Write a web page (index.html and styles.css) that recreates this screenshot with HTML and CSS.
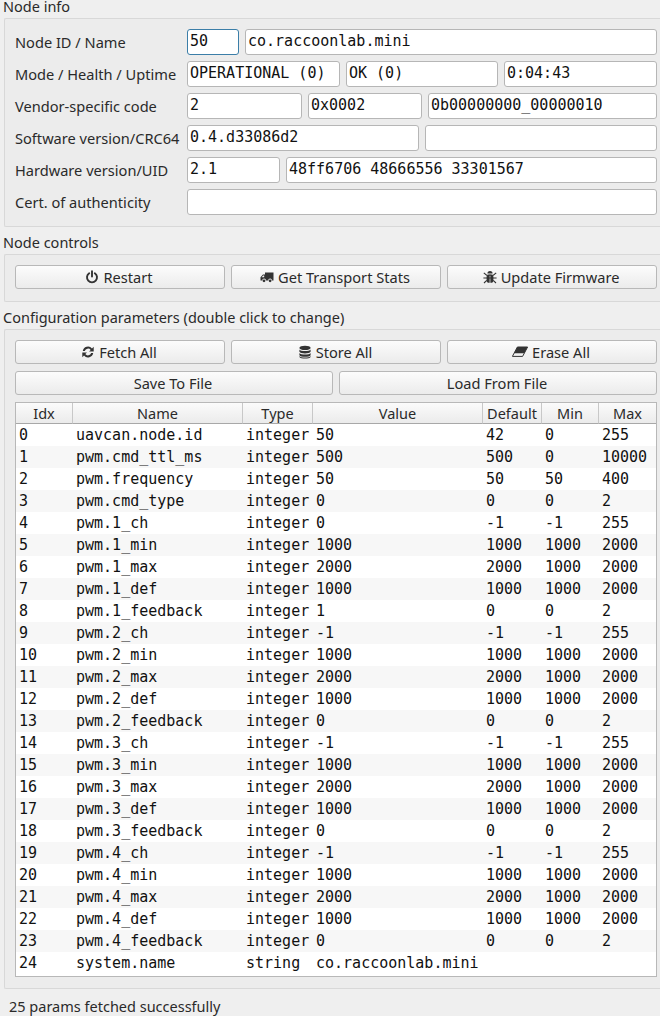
FILE: index.html
```html
<!DOCTYPE html>
<html lang="en">
<head>
<meta charset="utf-8">
<title>Node properties</title>
<link rel="stylesheet" href="styles.css">
</head>
<body>
<div class="title first">Node info</div>
<section class="group info">
  <div class="row"><label>Node ID / Name</label><input class="f w52 focus" value="50"><input class="f grow" value="co.raccoonlab.mini"></div>
  <div class="row"><label>Mode / Health / Uptime</label><input class="f w153" value="OPERATIONAL (0)"><input class="f w152" value="OK (0)"><input class="f grow" value="0:04:43"></div>
  <div class="row"><label>Vendor-specific code</label><input class="f w115" value="2"><input class="f w114" value="0x0002"><input class="f grow" value="0b00000000_00000010"></div>
  <div class="row"><label>Software version/CRC64</label><input class="f w232" value="0.4.d33086d2"><input class="f grow" value=""></div>
  <div class="row"><label>Hardware version/UID</label><input class="f w93" value="2.1"><input class="f grow" value="48ff6706 48666556 33301567"></div>
  <div class="row"><label>Cert. of authenticity</label><input class="f grow" value=""></div>
</section>
<div class="title">Node controls</div>
<section class="group controls">
  <div class="btns">
    <button><svg class="ic" viewBox="0 0 14 14"><path d="M4.2 3.2a5 5 0 1 0 5.6 0" fill="none" stroke="#333" stroke-width="1.9" stroke-linecap="round"/><path d="M7 1.2v5.4" stroke="#333" stroke-width="1.9" stroke-linecap="round"/></svg>Restart</button>
    <button><svg class="ic" viewBox="0 0 14 14"><path d="M5 2.5h8.5v8H12a1.9 1.9 0 0 0-3.8 0H6a1.9 1.9 0 0 0-3.8 0H.5V7.2L3 4.6h2zM1.6 7.3h2.6V5.4H3.2z" fill="#333" fill-rule="evenodd"/><circle cx="4" cy="10.8" r="1.4" fill="#333"/><circle cx="10.1" cy="10.8" r="1.4" fill="#333"/></svg>Get Transport Stats</button>
    <button><svg class="ic" viewBox="0 0 14 14"><path d="M4.4 3.6a2.6 2.6 0 0 1 5.2 0z" fill="#333"/><rect x="3.6" y="4.4" width="6.8" height="8.4" rx="2.6" fill="#333"/><path d="M7 5v8" stroke="#efefef" stroke-width=".7"/><path d="M.8 2.8l2.8 2.4h6.8l2.8-2.4M.4 8h13.2M1 13l2.8-2.6M13 13l-2.8-2.6" fill="none" stroke="#333" stroke-width="1.1"/></svg>Update Firmware</button>
  </div>
</section>
<div class="title">Configuration parameters (double click to change)</div>
<section class="group config">
  <div class="btns">
    <button><svg class="ic" viewBox="0 0 14 14"><path d="M1.8 6A5.3 5.3 0 0 1 11 3.4L12.7 1.8V6.6H8l1.7-1.7A3.4 3.4 0 0 0 3.8 6z" fill="#333"/><path d="M12.2 8A5.3 5.3 0 0 1 3 10.6L1.3 12.2V7.4H6L4.3 9.1A3.4 3.4 0 0 0 10.2 8z" fill="#333"/></svg>Fetch All</button>
    <button><svg class="ic" viewBox="0 0 14 14"><ellipse cx="7" cy="2.9" rx="5.6" ry="2.2" fill="#333"/><path d="M1.4 4.4c1 2 10.200 2 11.200 0v2.400c-1 2.100-10.200 2.100-11.200 0zM1.400 7.900c1 2 10.200 2 11.200 0v2.300c-1 2.200-10.200 2.200-11.200 0z" fill="#333"/><path d="M1.400 11c1 2 10.200 2 11.200 0v.9c-1 2.100-10.200 2.100-11.200 0z" fill="#333"/></svg>Store All</button>
    <button><svg class="ic wide" viewBox="0 0 16 14"><path d="M5.400 2h10.200L10.600 11.400H.4z" fill="none" stroke="#333" stroke-width="1"/><path d="M5.400 2h10.200L12.300 8.200H2.100z" fill="#333"/></svg>Erase All</button>
  </div>
  <div class="btns">
    <button>Save To File</button>
    <button>Load From File</button>
  </div>
  <table>
    <colgroup>
      <col class="c1"><col class="c2"><col class="c3"><col class="c4"><col class="c5"><col class="c6"><col class="c7">
    </colgroup>
    <thead>
      <tr><th>Idx</th><th>Name</th><th>Type</th><th>Value</th><th>Default</th><th>Min</th><th>Max</th></tr>
    </thead>
    <tbody>
      <tr><td>0</td><td>uavcan.node.id</td><td>integer</td><td>50</td><td>42</td><td>0</td><td>255</td></tr>
      <tr><td>1</td><td>pwm.cmd_ttl_ms</td><td>integer</td><td>500</td><td>500</td><td>0</td><td>10000</td></tr>
      <tr><td>2</td><td>pwm.frequency</td><td>integer</td><td>50</td><td>50</td><td>50</td><td>400</td></tr>
      <tr><td>3</td><td>pwm.cmd_type</td><td>integer</td><td>0</td><td>0</td><td>0</td><td>2</td></tr>
      <tr><td>4</td><td>pwm.1_ch</td><td>integer</td><td>0</td><td>-1</td><td>-1</td><td>255</td></tr>
      <tr><td>5</td><td>pwm.1_min</td><td>integer</td><td>1000</td><td>1000</td><td>1000</td><td>2000</td></tr>
      <tr><td>6</td><td>pwm.1_max</td><td>integer</td><td>2000</td><td>2000</td><td>1000</td><td>2000</td></tr>
      <tr><td>7</td><td>pwm.1_def</td><td>integer</td><td>1000</td><td>1000</td><td>1000</td><td>2000</td></tr>
      <tr><td>8</td><td>pwm.1_feedback</td><td>integer</td><td>1</td><td>0</td><td>0</td><td>2</td></tr>
      <tr><td>9</td><td>pwm.2_ch</td><td>integer</td><td>-1</td><td>-1</td><td>-1</td><td>255</td></tr>
      <tr><td>10</td><td>pwm.2_min</td><td>integer</td><td>1000</td><td>1000</td><td>1000</td><td>2000</td></tr>
      <tr><td>11</td><td>pwm.2_max</td><td>integer</td><td>2000</td><td>2000</td><td>1000</td><td>2000</td></tr>
      <tr><td>12</td><td>pwm.2_def</td><td>integer</td><td>1000</td><td>1000</td><td>1000</td><td>2000</td></tr>
      <tr><td>13</td><td>pwm.2_feedback</td><td>integer</td><td>0</td><td>0</td><td>0</td><td>2</td></tr>
      <tr><td>14</td><td>pwm.3_ch</td><td>integer</td><td>-1</td><td>-1</td><td>-1</td><td>255</td></tr>
      <tr><td>15</td><td>pwm.3_min</td><td>integer</td><td>1000</td><td>1000</td><td>1000</td><td>2000</td></tr>
      <tr><td>16</td><td>pwm.3_max</td><td>integer</td><td>2000</td><td>2000</td><td>1000</td><td>2000</td></tr>
      <tr><td>17</td><td>pwm.3_def</td><td>integer</td><td>1000</td><td>1000</td><td>1000</td><td>2000</td></tr>
      <tr><td>18</td><td>pwm.3_feedback</td><td>integer</td><td>0</td><td>0</td><td>0</td><td>2</td></tr>
      <tr><td>19</td><td>pwm.4_ch</td><td>integer</td><td>-1</td><td>-1</td><td>-1</td><td>255</td></tr>
      <tr><td>20</td><td>pwm.4_min</td><td>integer</td><td>1000</td><td>1000</td><td>1000</td><td>2000</td></tr>
      <tr><td>21</td><td>pwm.4_max</td><td>integer</td><td>2000</td><td>2000</td><td>1000</td><td>2000</td></tr>
      <tr><td>22</td><td>pwm.4_def</td><td>integer</td><td>1000</td><td>1000</td><td>1000</td><td>2000</td></tr>
      <tr><td>23</td><td>pwm.4_feedback</td><td>integer</td><td>0</td><td>0</td><td>0</td><td>2</td></tr>
      <tr><td>24</td><td>system.name</td><td>string</td><td colspan="4">co.raccoonlab.mini</td></tr>
    </tbody>
  </table>
</section>
<footer class="status">25 params fetched successfully</footer>
</body>
</html>
```
FILE: styles.css
```css
* { box-sizing: border-box; }
html, body { height: 100%; }
body {
  margin: 0;
  background: #efefef;
  color: #2a2a2a;
  font: 14.500px/18px "Noto Sans", sans-serif;
  overflow: hidden;
}
.title {
  margin: 9px 0 0 3px;
  height: 18px;
  line-height: 12px;
}
.title.first { margin-top: 0; }
.group {
  margin-left: 4px;
  padding: 10px 3px 11px 10px;
  border: 1px solid #d8d8d8;
  border-right: 0;
  background: #ececec;
  border-radius: 2px 0 0 2px;
  display: flex;
  flex-direction: column;
  gap: 6px;
}
.controls { padding-bottom: 12px; }
.config { gap: 7px; }
.row { display: flex; align-items: center; gap: 6px; height: 26px; }
.row label {
  width: 166px;
  white-space: nowrap;
  font-size: 14.600px;
  color: #2a2a2a;
}
.f {
  height: 26px;
  min-width: 0;
  padding: 0 2px 2px;
  border: 1px solid #b6b6b6;
  border-radius: 3px;
  background: #fff;
  color: #111;
  font: 15px "DejaVu Sans Mono", monospace;
  outline: none;
}
.focus { border-color: #3b7ea8; }
.grow { flex: 1; }
.w52 { width: 52px; }
.w93 { width: 93px; }
.w114 { width: 114px; }
.w115 { width: 115px; }
.w152 { width: 152px; }
.w153 { width: 153px; }
.w232 { width: 232px; }
.btns { display: flex; gap: 6px; }
button {
  flex: 1 1 0;
  height: 24px;
  padding: 0 2px 0 0;
  display: flex;
  align-items: center;
  justify-content: center;
  gap: 4px;
  border: 1px solid #b8b8b8;
  border-radius: 3px;
  background: linear-gradient(#fcfcfc, #ebebeb);
  color: #2a2a2a;
  font: 14.600px "Noto Sans", sans-serif;
}
.ic { width: 14px; height: 14px; flex: none; }
.ic.wide { width: 16px; }
table {
  width: 642px;
  table-layout: fixed;
  border-collapse: separate;
  border-spacing: 0;
  border: 1px solid #b8b8b8;
  background: #fff;
  color: #111;
}
.c1 { width: 57px; }
.c2 { width: 170px; }
.c3 { width: 70px; }
.c4 { width: 170px; }
.c5 { width: 59px; }
.c6 { width: 57px; }
.c7 { width: 57px; }
th {
  height: 21px;
  padding: 0;
  border-right: 1px solid #c8c8c8;
  border-bottom: 1px solid #a8a8a8;
  background: linear-gradient(#fbfbfb, #ebebeb);
  color: #2a2a2a;
  font: 400 14.500px/18px "Noto Sans", sans-serif;
  text-align: center;
}
th:last-child { border-right: 0; }
td {
  height: 22px;
  padding: 1px 0 1px 3px;
  font: 15px/20px "DejaVu Sans Mono", monospace;
  white-space: pre;
  overflow: hidden;
}
tbody tr:nth-child(even) td { background: #f7f7f7; }
tbody tr:last-child td { height: 24px; padding-bottom: 3px; }
.status { margin: 0; padding: 8px 0 0 9px; line-height: 18px; }
```
